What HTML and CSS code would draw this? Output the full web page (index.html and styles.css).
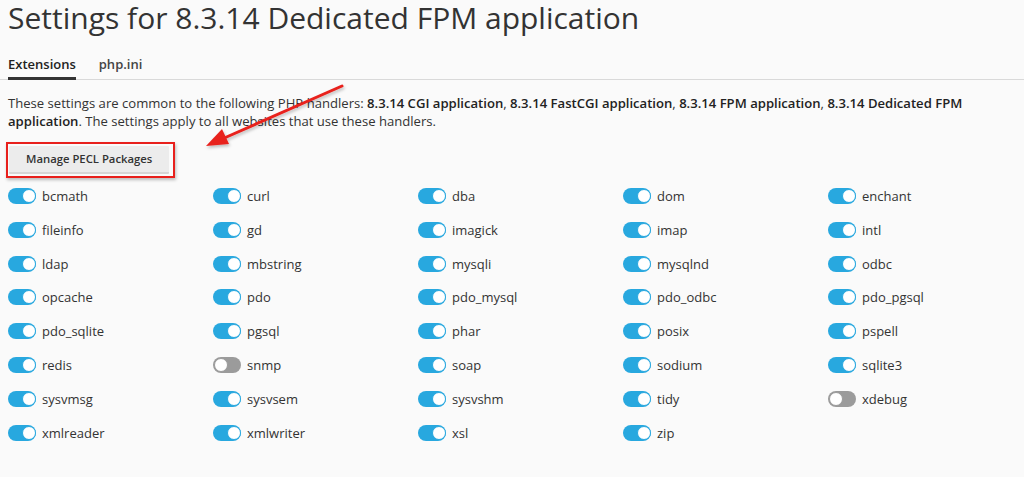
FILE: index.html
```html
<!DOCTYPE html>
<html lang="en">
<head>
<meta charset="utf-8">
<title>Settings for 8.3.14 Dedicated FPM application</title>
<link rel="stylesheet" href="styles.css">
</head>
<body>
<div class="page">
  <h1 class="title">Settings for 8.3.14 Dedicated FPM application</h1>

  <nav class="tabs">
    <a class="tab tab-active">Extensions</a>
    <a class="tab">php.ini</a>
  </nav>

  <p class="intro">These settings are common to the following PHP handlers: <b>8.3.14 CGI application</b>, <b>8.3.14 FastCGI application</b>, <b>8.3.14 FPM application</b>, <b>8.3.14 Dedicated FPM application</b>. The settings apply to all websites that use these handlers.</p>

  <div class="toolbar">
    <span class="highlight"><button class="btn">Manage PECL Packages</button></span>
  </div>

  <div class="ext-grid">
    <label class="ext"><span class="switch on"></span>bcmath</label>
    <label class="ext"><span class="switch on"></span>curl</label>
    <label class="ext"><span class="switch on"></span>dba</label>
    <label class="ext"><span class="switch on"></span>dom</label>
    <label class="ext"><span class="switch on"></span>enchant</label>

    <label class="ext"><span class="switch on"></span>fileinfo</label>
    <label class="ext"><span class="switch on"></span>gd</label>
    <label class="ext"><span class="switch on"></span>imagick</label>
    <label class="ext"><span class="switch on"></span>imap</label>
    <label class="ext"><span class="switch on"></span>intl</label>

    <label class="ext"><span class="switch on"></span>ldap</label>
    <label class="ext"><span class="switch on"></span>mbstring</label>
    <label class="ext"><span class="switch on"></span>mysqli</label>
    <label class="ext"><span class="switch on"></span>mysqlnd</label>
    <label class="ext"><span class="switch on"></span>odbc</label>

    <label class="ext"><span class="switch on"></span>opcache</label>
    <label class="ext"><span class="switch on"></span>pdo</label>
    <label class="ext"><span class="switch on"></span>pdo_mysql</label>
    <label class="ext"><span class="switch on"></span>pdo_odbc</label>
    <label class="ext"><span class="switch on"></span>pdo_pgsql</label>

    <label class="ext"><span class="switch on"></span>pdo_sqlite</label>
    <label class="ext"><span class="switch on"></span>pgsql</label>
    <label class="ext"><span class="switch on"></span>phar</label>
    <label class="ext"><span class="switch on"></span>posix</label>
    <label class="ext"><span class="switch on"></span>pspell</label>

    <label class="ext"><span class="switch on"></span>redis</label>
    <label class="ext"><span class="switch"></span>snmp</label>
    <label class="ext"><span class="switch on"></span>soap</label>
    <label class="ext"><span class="switch on"></span>sodium</label>
    <label class="ext"><span class="switch on"></span>sqlite3</label>

    <label class="ext"><span class="switch on"></span>sysvmsg</label>
    <label class="ext"><span class="switch on"></span>sysvsem</label>
    <label class="ext"><span class="switch on"></span>sysvshm</label>
    <label class="ext"><span class="switch on"></span>tidy</label>
    <label class="ext"><span class="switch"></span>xdebug</label>

    <label class="ext"><span class="switch on"></span>xmlreader</label>
    <label class="ext"><span class="switch on"></span>xmlwriter</label>
    <label class="ext"><span class="switch on"></span>xsl</label>
    <label class="ext"><span class="switch on"></span>zip</label>
  </div>

  <!-- annotation arrow pointing at the PECL button -->
  <svg class="pointer" width="160" height="80" viewBox="0 0 160 80">
    <defs>
      <filter id="soft" x="-20%" y="-20%" width="140%" height="140%">
        <feDropShadow dx="1" dy="2" stdDeviation="1.5" flood-color="#000" flood-opacity="0.25"/>
      </filter>
    </defs>
    <g filter="url(#soft)">
      <line x1="142" y1="6" x2="22" y2="59" stroke="#e8201c" stroke-width="3" stroke-linecap="round"/>
      <path d="M6 66 L22 49 L29 64 Z" fill="#e8201c"/>
    </g>
  </svg>
</div>
</body>
</html>
```

FILE: styles.css
```css
html, body {
  margin: 0;
  padding: 0;
  background: #fafafa;
}

body {
  font-family: "Open Sans", "Noto Sans", sans-serif;
  color: #333;
  width: 1024px;
  height: 477px;
  overflow: hidden;
}

.page {
  position: relative;
  padding: 0 0 0 8px;
}

.title {
  margin: -2px 0 0;
  font-size: 30px;
  font-weight: 400;
  line-height: 40px;
  color: #333;
}

.tabs {
  display: flex;
  margin-top: 13px;
  margin-left: -8px;
  padding-left: 8px;
  border-bottom: 1px solid #d9d9d9;
}

.tab {
  font-size: 13px;
  font-weight: 600;
  line-height: 18px;
  padding: 4px 0 4px;
  margin-right: 23px;
  color: #444;
  border-bottom: 3px solid transparent;
  margin-bottom: -1px;
}

.tab-active {
  color: #222;
  border-bottom-color: #333;
}

.intro {
  margin: 14px 0 0;
  font-size: 13.1px;
  line-height: 18px;
  max-width: 1000px;
  color: #333;
}

.intro b {
  font-weight: 600;
  color: #222;
}

.toolbar {
  margin-top: 12px;
  margin-left: -2px;
}

.highlight {
  display: inline-block;
  border: 2px solid #e8201c;
  padding: 2px 4px 2px 1px;
  box-shadow: 1px 2px 3px rgba(0, 0, 0, 0.25);
}

.btn {
  display: block;
  font-family: inherit;
  font-size: 11.3px;
  font-weight: 600;
  color: #333;
  background: #ececec;
  border: 0;
  border-bottom: 2px solid #d6d6d6;
  padding: 5px 17px 5px;
  line-height: 16px;
  border-radius: 1px;
}

.ext-grid {
  display: grid;
  grid-template-columns: repeat(5, 205px);
  grid-auto-rows: 33.8px;
  margin-top: 9px;
}

.ext {
  display: flex;
  align-items: center;
  height: 18px;
  font-size: 13px;
  color: #333;
}

.switch {
  position: relative;
  box-sizing: border-box;
  width: 28px;
  height: 16px;
  border-radius: 8px;
  background: #9b9b9b;
  margin-right: 6px;
  flex: none;
}

.switch::after {
  content: "";
  position: absolute;
  top: 1px;
  left: 1px;
  width: 14px;
  height: 14px;
  box-sizing: border-box;
  border-radius: 50%;
  background: #fff;
  border: 1px solid #9b9b9b;
}

.switch.on {
  background: #28a8df;
}

.switch.on::after {
  left: auto;
  right: 0;
  border-color: #28a8df;
}

.pointer {
  position: absolute;
  left: 200px;
  top: 82px;
  pointer-events: none;
}
```
